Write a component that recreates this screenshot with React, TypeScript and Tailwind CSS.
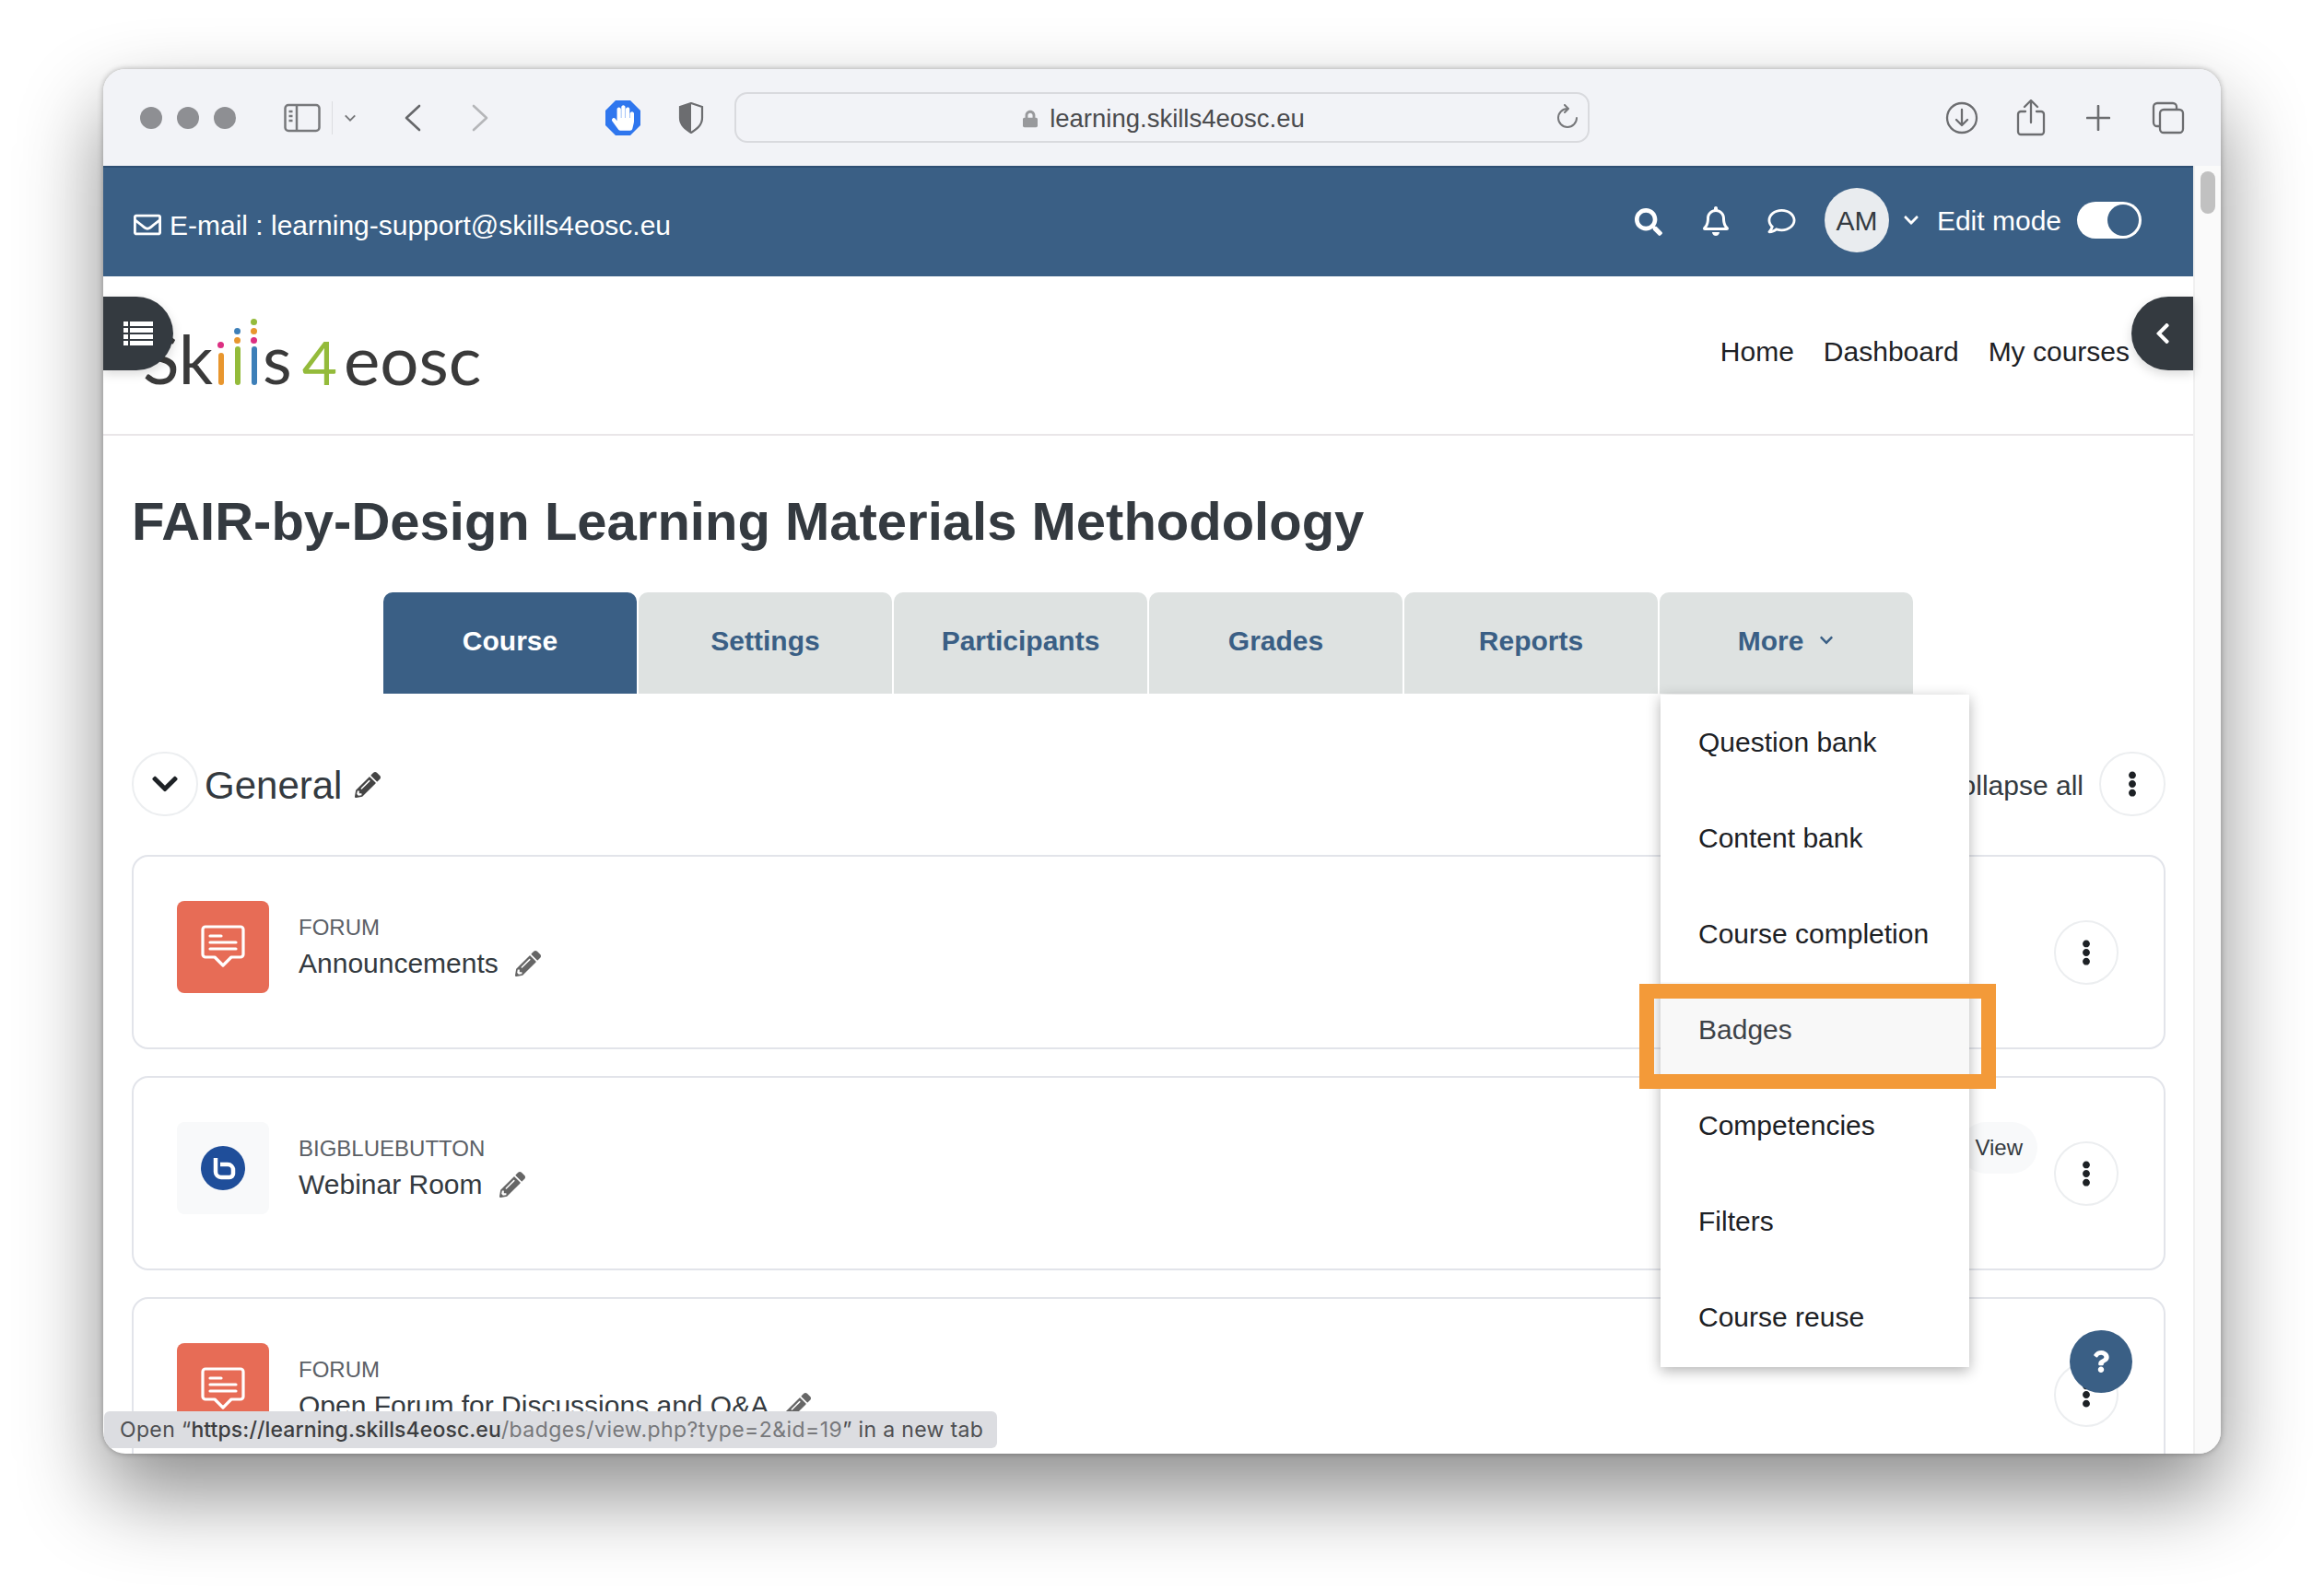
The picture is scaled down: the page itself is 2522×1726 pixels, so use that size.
import React from 'react';
import { FaChevronDown, FaChevronLeft, FaEllipsisV, FaHandPaper, FaLock, FaPencilAlt, FaQuestion, FaRegBell, FaRegComment, FaRegEnvelope, FaSearch } from 'react-icons/fa';

const tabs = ['Course', 'Settings', 'Participants', 'Grades', 'Reports'];
const menuItems = ['Question bank', 'Content bank', 'Course completion', 'Badges', 'Competencies', 'Filters', 'Course reuse'];

const ForumIcon = () => (
  <svg viewBox="0 0 48 48" className="w-[48px] h-[48px]" fill="none" stroke="#fff" strokeWidth="3.200" strokeLinecap="round" strokeLinejoin="round">
    <path d="M5 2h38a3 3 0 0 1 3 3v27a3 3 0 0 1-3 3H33l-9 9-9-9H5a3 3 0 0 1-3-3V5a3 3 0 0 1 3-3z" />
    <path d="M10 12h12M10 19h28M10 26h28" />
  </svg>
);

const BbbIcon = () => (
  <svg viewBox="0 0 48 48" className="w-[48px] h-[48px]">
    <circle cx="24" cy="24" r="24" fill="#1f4e9a" />
    <path d="M16 13v15a6 6 0 0 0 6 6h9a4 4 0 0 0 4-4v-4a6 6 0 0 0-6-6h-8" fill="none" stroke="#fff" strokeWidth="4.500" strokeLinejoin="round" />
  </svg>
);

const ListIcon = () => (
  <svg viewBox="0 0 32 26" className="w-[32px] h-[26px]" fill="#fff">
    <path d="M0 0h5v5H0zM7 0h25v5H7zM0 7h5v5H0zM7 7h25v5H7zM0 14h5v5H0zM7 14h25v5H7zM0 21h5v5H0zM7 21h25v5H7z" />
  </svg>
);

const DotsButton = ({ wide }: { wide?: boolean }) => (
  <div className={`h-[70px] rounded-full border-2 border-[#eceef0] bg-white flex items-center justify-center shrink-0 ${wide ? 'w-[72px]' : 'w-[70px]'}`}>
    <FaEllipsisV className="w-[24px] h-[28px] text-[#1d2125]" />
  </div>
);

const ActivityCard = ({ kind, name, bbb, view }: { kind: string; name: string; bbb?: boolean; view?: boolean }) => (
  <div className="border-2 border-[#e2e4ea] rounded-[18px] bg-white flex items-center pl-[47px] pr-[49px] shrink-0 h-[211px]">
    <div className={`w-[100px] h-[100px] mb-[11px] rounded-[8px] flex items-center justify-center shrink-0 ${bbb ? 'bg-[#f8f9fa]' : 'bg-[#e76c56]'}`}>
      {bbb ? <BbbIcon /> : <ForumIcon />}
    </div>
    <div className="ml-[32px] mb-[8px] flex flex-col">
      <span className="text-[24px] leading-[30px] text-[#5b6066]">{kind}</span>
      <span className="mt-[3px] text-[30px] leading-[42px] text-[#343a40] flex items-center whitespace-nowrap">
        {name}
        <FaPencilAlt className="ml-[18px] w-[28px] h-[28px] text-[#666]" />
      </span>
    </div>
    <div className="ml-auto flex items-center gap-[18px]">
      {view && <span className="rounded-full bg-[#f8f9fa] h-[56px] -mt-[56px] px-[16px] flex items-center text-[24px] text-[#343a40]">View</span>}
      <DotsButton />
    </div>
  </div>
);

const Dot = ({ className }: { className: string }) => <div className={`w-[7px] h-[7px] rounded-full ${className}`} />;

const Logo = () => (
  <div className="flex items-end h-[126px] ml-[43px] text-[73px] leading-[73px] text-[#3a3a3a] font-['Lato',sans-serif]">
    <span>Sk</span>
    <div className="flex items-end gap-[11px] ml-[5px] mr-[6px] mb-[8px]">
      <div className="flex flex-col items-center gap-[5px]">
        <Dot className="bg-[#dc2f82]" />
        <div className="w-[6px] h-[35px] rounded-full bg-[#e8962e]" />
      </div>
      <div className="flex flex-col items-center gap-[3px]">
        <Dot className="bg-[#3d7fb8]" />
        <Dot className="bg-[#e8962e]" />
        <div className="w-[6px] h-[42px] rounded-full bg-[#94bb3b]" />
      </div>
      <div className="flex flex-col items-center gap-[3px]">
        <Dot className="bg-[#94bb3b]" />
        <Dot className="bg-[#e8962e]" />
        <Dot className="bg-[#dc2f82]" />
        <div className="w-[6px] h-[42px] rounded-full bg-[#3d7fb8]" />
      </div>
    </div>
    <span>s</span>
    <span className="ml-[11px] text-[66px] leading-[66px] text-[#94bb3b]">4</span>
    <span className="ml-[7px] text-[74.500px]">eosc</span>
  </div>
);

export default function App() {
  return (
    <div className="w-[2522px] h-[1726px] bg-white pl-[112px] pt-[75px] font-['Liberation_Sans',Arial,sans-serif] overflow-hidden">
      <div className="relative w-[2298px] h-[1503px] rounded-[24px] overflow-hidden bg-white shadow-[0_44px_90px_rgba(0,0,0,0.45),0_0_6px_rgba(0,0,0,0.3)] flex flex-col">
        {/* browser toolbar */}
        <div className="h-[105px] bg-[#f2f3f7] flex items-center shrink-0 pl-[40px] pr-[39px] text-[#6c6d70]">
          <div className="flex gap-[16px]">
            <div className="w-[24px] h-[24px] rounded-full bg-[#8e8f93]" />
            <div className="w-[24px] h-[24px] rounded-full bg-[#8e8f93]" />
            <div className="w-[24px] h-[24px] rounded-full bg-[#8e8f93]" />
          </div>
          <svg viewBox="0 0 40 32" className="ml-[52px] w-[40px] h-[32px]" fill="none" stroke="#77787b" strokeWidth="2.500">
            <rect x="1.500" y="2" width="37" height="28" rx="3.500" />
            <path d="M14 2v28M5.500 9h4M5.500 14h4M5.500 19h4" />
          </svg>
          <div className="ml-[12px] w-[1px] h-[36px] bg-[#dcdde0]" />
          <svg viewBox="0 0 16 10" className="ml-[12px] w-[14px] h-[10px]" fill="none" stroke="#77787b" strokeWidth="2.200"><path d="M2 2l6 6 6-6" /></svg>
          <svg viewBox="0 0 20 30" className="ml-[51px] w-[20px] h-[30px]" fill="none" stroke="#66676a" strokeWidth="2.600" strokeLinecap="round" strokeLinejoin="round"><path d="M17 2L3 15l14 13" /></svg>
          <svg viewBox="0 0 20 30" className="ml-[53px] w-[20px] h-[30px]" fill="none" stroke="#b5b6b9" strokeWidth="2.600" strokeLinecap="round" strokeLinejoin="round"><path d="M3 2l14 13L3 28" /></svg>
          <div className="ml-[126px] relative w-[38px] h-[38px] flex items-center justify-center">
            <svg viewBox="0 0 38 38" className="absolute inset-0 w-[38px] h-[38px]"><path d="M11 0h16l11 11v16L27 38H11L0 27V11z" fill="#2f76ee" /></svg>
            <FaHandPaper className="relative w-[24px] h-[28px] text-white" />
          </div>
          <svg viewBox="0 0 28 34" className="ml-[41px] w-[28px] h-[34px]">
            <path d="M14 1l12 4v12c0 8-6 12-12 16C8 29 2 25 2 17V5z" fill="none" stroke="#6c6d70" strokeWidth="2.200" />
            <path d="M14 1L2 5v12c0 8 6 12 12 16z" fill="#6c6d70" />
          </svg>
          <div className="ml-[33px] w-[928px] h-[55px] rounded-[14px] border-2 border-[#d9dade] flex items-center justify-center pl-[4px] relative text-[#4a4b4e]">
            <FaLock className="w-[16px] h-[22px] text-[#98999c] mr-[13px] mt-[2px]" />
            <span className="text-[27.500px] leading-none mt-[3px]">learning.skills4eosc.eu</span>
            <svg viewBox="0 0 24 26" className="absolute right-[10px] top-[11px] w-[24px] h-[26px]" fill="none" stroke="#77787b" strokeWidth="2" strokeLinecap="round" strokeLinejoin="round"><path d="M12 5A10 10 0 1 0 22 15M9 1l4 4-4 4" /></svg>
          </div>
          <div className="ml-auto flex items-center">
            <svg viewBox="0 0 36 36" className="w-[36px] h-[36px]" fill="none" stroke="#6c6d70" strokeWidth="2.300" strokeLinecap="round" strokeLinejoin="round"><circle cx="18" cy="18" r="16" /><path d="M18 9v17M12 20l6 6 6-6" /></svg>
            <svg viewBox="0 0 32 40" className="ml-[41px] w-[32px] h-[40px]" fill="none" stroke="#6c6d70" strokeWidth="2.300" strokeLinecap="round" strokeLinejoin="round"><path d="M10 13H5a3 3 0 0 0-3 3v19a3 3 0 0 0 3 3h22a3 3 0 0 0 3-3V16a3 3 0 0 0-3-3h-5M16 25V2M9 8l7-7 7 7" /></svg>
            <svg viewBox="0 0 26 28" className="ml-[44px] w-[26px] h-[28px]" fill="none" stroke="#6c6d70" strokeWidth="2.600" strokeLinecap="round"><path d="M13 1v26M1 14h24" /></svg>
            <svg viewBox="0 0 36 36" className="ml-[45px] w-[36px] h-[36px]" fill="none" stroke="#6c6d70" strokeWidth="2.300"><path d="M8 27H6a4 4 0 0 1-4-4V6a4 4 0 0 1 4-4h17a4 4 0 0 1 4 4v2" /><rect x="9" y="9" width="25" height="25" rx="4" /></svg>
          </div>
        </div>

        <div className="flex flex-1 min-h-0">
          <div className="w-[2268px] flex flex-col min-h-0 overflow-hidden">
            {/* site header */}
            <div className="h-[120px] bg-[#3a5f85] flex items-center shrink-0 pl-[32px] pr-[56px] text-white text-[30px] border-t-2 border-[#2e4f73]">
              <div className="flex items-center mt-[6px]">
                <FaRegEnvelope className="w-[32px] h-[30px]" />
                <span className="ml-[8px]">E-mail : learning-support@skills4eosc.eu</span>
              </div>
              <div className="ml-auto flex items-center -mt-[4px]">
                <FaSearch className="w-[30px] h-[30px] mt-[3px]" />
                <FaRegBell className="ml-[43px] w-[30px] h-[32px] mt-[2px]" />
                <FaRegComment className="ml-[40px] w-[33px] h-[30px] mt-[2px]" />
                <div className="ml-[30px] w-[70px] h-[70px] rounded-full bg-[#e9ecef] text-[#343a40] flex items-center justify-center">AM</div>
                <FaChevronDown className="ml-[14px] w-[20px] h-[18px]" />
                <span className="ml-[18px]">Edit mode</span>
                <div className="ml-[17px] w-[70px] h-[40px] rounded-full bg-white flex items-center justify-end pr-[3px]">
                  <div className="w-[34px] h-[34px] rounded-full bg-[#3a5f85]" />
                </div>
              </div>
            </div>

            {/* logo and primary nav */}
            <div className="h-[173px] shrink-0 border-b-2 border-[#e9e6e8] flex items-start justify-between pr-[69px]">
              <Logo />
              <div className="flex gap-[32px] text-[30px] text-[#1d2125] mt-[59px]">
                <span>Home</span>
                <span>Dashboard</span>
                <span>My courses</span>
              </div>
            </div>

            <div className="pl-[31px] pr-[30px] flex flex-col flex-1 min-h-0">
              <h1 className="mt-[58px] text-[58px] leading-[70px] font-bold text-[#343a40] whitespace-nowrap">FAIR-by-Design Learning Materials Methodology</h1>

              <div className="mt-[42px] ml-[273px] flex gap-[2px] shrink-0">
                {tabs.map((tab, i) => (
                  <div key={tab} className={`w-[275px] h-[110px] rounded-t-[10px] flex items-center justify-center pb-[6px] text-[30px] font-bold ${i === 0 ? 'bg-[#3a5f85] text-white' : 'bg-[#dee2e1] text-[#3a5f85]'}`}>{tab}</div>
                ))}
                <div className="w-[275px] h-[110px] rounded-t-[10px] flex items-center justify-center pb-[6px] gap-[16px] text-[30px] font-bold bg-[#dee2e1] text-[#3a5f85]">
                  More
                  <FaChevronDown className="w-[18px] h-[16px]" />
                </div>
              </div>

              <div className="mt-[63px] h-[70px] flex items-center shrink-0">
                <div className="w-[72px] h-[70px] rounded-full border-2 border-[#eceef0] flex items-center justify-center">
                  <FaChevronDown className="w-[32px] h-[32px] text-[#1d2125]" />
                </div>
                <span className="ml-[7px] mt-[2px] text-[42px] text-[#343a40]">General</span>
                <FaPencilAlt className="ml-[14px] mt-[2px] w-[28px] h-[28px] text-[#444]" />
                <span className="ml-auto mr-[17px] mt-[3px] text-[30px] text-[#343a40]">Collapse all</span>
                <DotsButton wide />
              </div>

              <div className="mt-[42px] flex flex-col gap-[29px]">
                <ActivityCard kind="FORUM" name="Announcements" />
                <ActivityCard kind="BIGBLUEBUTTON" name="Webinar Room" bbb view />
                <ActivityCard kind="FORUM" name="Open Forum for Discussions and Q&A" />
              </div>
            </div>
          </div>

          {/* page scrollbar */}
          <div className="w-[30px] bg-[#fafafa] border-l-2 border-[#f0f0f0] pl-[6px] pt-[6px]">
            <div className="w-[16px] h-[46px] rounded-full bg-[#c1c1c1]" />
          </div>
        </div>

        {/* drawer toggles */}
        <div className="absolute left-0 top-[247px] w-[76px] h-[80px] rounded-r-[40px] bg-[#343a40] flex items-center justify-center shadow-[0_4px_12px_rgba(0,0,0,0.15)]">
          <ListIcon />
        </div>
        <div className="absolute left-[2201px] top-[247px] w-[67px] h-[80px] rounded-l-[40px] bg-[#343a40] flex items-center justify-center shadow-[0_4px_12px_rgba(0,0,0,0.15)]">
          <FaChevronLeft className="w-[24px] h-[26px] text-white" />
        </div>

        {/* More menu */}
        <div className="absolute left-[1690px] top-[679px] w-[335px] pb-[2px] bg-white shadow-[0_4px_14px_rgba(0,0,0,0.3)] flex flex-col">
          {menuItems.map((item) => (
            <div key={item} className={`h-[104px] pb-[2px] flex items-center pl-[41px] text-[30px] whitespace-nowrap ${item === 'Badges' ? 'bg-[#f8f8f8] text-[#3d4248]' : 'text-[#1d2125]'}`}>{item}</div>
          ))}
        </div>
        {/* annotation */}
        <div className="absolute left-[1667px] top-[993px] w-[387px] h-[114px] border-[16px] border-[#f39a39]" />

        {/* help button */}
        <div className="absolute left-[2134px] top-[1369px] w-[68px] h-[68px] rounded-full bg-[#3a5f85] flex items-center justify-center">
          <FaQuestion className="w-[20px] h-[24px] text-white" />
        </div>

        {/* status bar */}
        <div className="absolute left-[1px] top-[1457px] h-[40px] w-[969px] rounded-[6px] bg-[#dcdde1] flex items-center pl-[17px] text-[23px] tracking-[0.35px] text-[#4e4f52] whitespace-pre font-['Inter',sans-serif]">
          Open “<span className="font-medium tracking-[0.1px] text-[#3c3d40]">https://learning.skills4eosc.eu</span><span className="tracking-[0.45px] text-[#77787b]">/badges/view.php?type=2&amp;id=19</span>” in a new tab
        </div>
      </div>
    </div>
  );
}
